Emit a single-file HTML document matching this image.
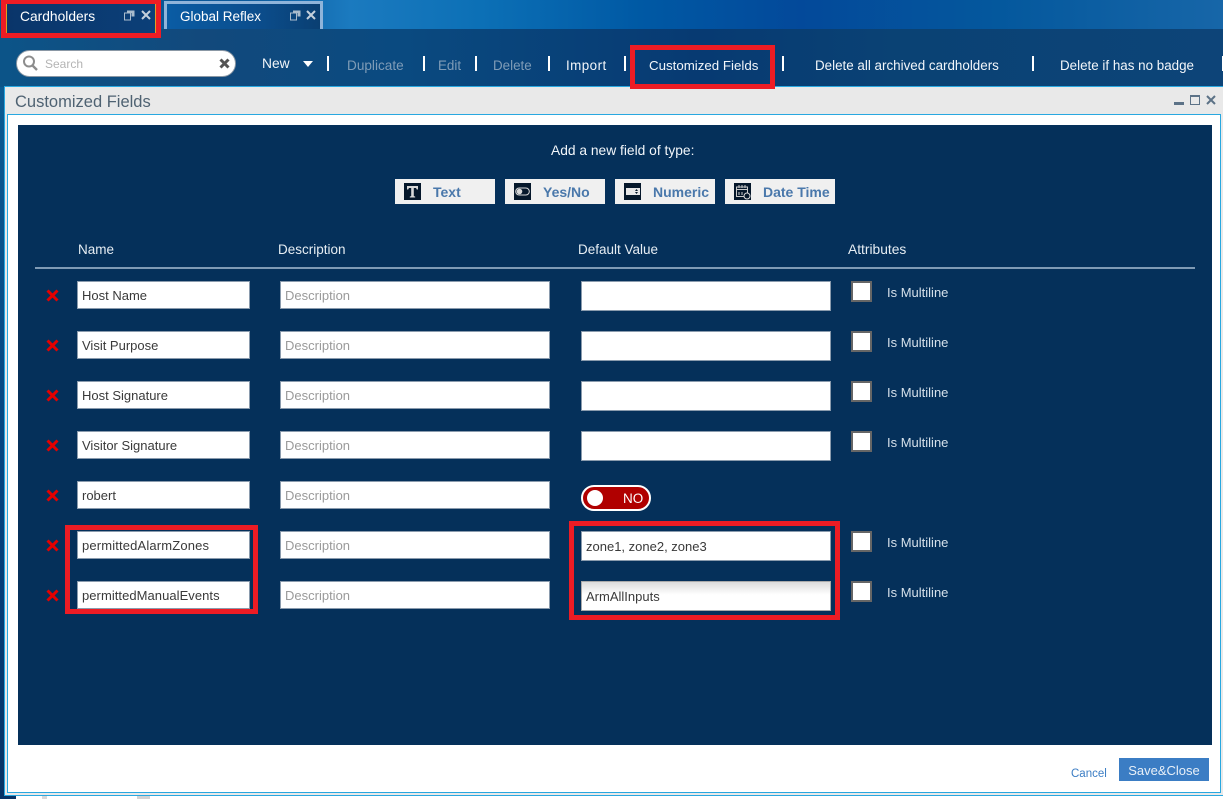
<!DOCTYPE html>
<html lang="en">
<head>
<meta charset="utf-8">
<title>Customized Fields</title>
<style>
html,body{margin:0;padding:0;width:1223px;height:799px;overflow:hidden;background:#fff}
body{position:relative;font-family:"Liberation Sans",Arial,sans-serif;font-size:13.5px}
div,span,svg{position:absolute;box-sizing:border-box}
.t{white-space:nowrap;line-height:18px;height:18px}
.top{left:0;top:0;width:1223px;height:29px;background:linear-gradient(90deg,#0a4d8a 0,#0b5a9c 250px,#1b7abf 350px,#0c70b6 480px,#0059a4 640px,#03499a 800px,#04589d 1000px,#1766a8 1223px)}
.bar{left:0;top:29px;width:1223px;height:58px;background:linear-gradient(90deg,#0c5488 0,#12497c 200px,#0a4a80 400px,#073a72 700px,#0a4274 900px,#0d4478 1223px)}
.side{left:0;top:87px;width:5px;height:712px;background:linear-gradient(180deg,#0b5b93,#05427e 60%,#073365)}
.tb{color:#f2f6fa;top:57px;font-size:13.4px}
.dis{color:#7f9cb7}
.sep{top:56px;width:2px;height:15px;background:#fff}
.in{background:#fff;border:1px solid #8a9bad;height:28px;color:#3a3a3a;padding-left:4px;line-height:27px;font-size:13px;white-space:nowrap}
.n{left:77px;width:173px}
.d{left:280px;width:270px;color:#9a9a9a}
.v{left:581px;width:250px;height:30px;line-height:29px}
.cb{left:851px;width:21px;height:21px;background:#fff;border:2px solid #666}
.ml{left:887px;color:#d5e0ea;font-size:13px}
.h{color:#e6edf3;top:241px;font-size:13.5px}
.x{left:46px;width:13px;height:13px}
.btn{top:179px;height:25px;background:#f0f0f0}
.ico{left:9px;top:4px;width:17px;height:17px;background:#06182b}
.lbl{top:4px;left:38px;color:#4a78ab;font-weight:bold;font-size:14px;line-height:18px;white-space:nowrap}
.red{border:5px solid #ed1c24}
</style>
</head>
<body>
<div class="top"></div>
<div class="bar"></div>
<div class="side"></div>

<!-- tabs -->
<div style="left:6px;top:4px;width:150px;height:29px;background:linear-gradient(90deg,#0a356a,#0b3f78);border-left:1px solid #e0a020;border-right:1px solid #e0a020"></div>
<div class="t" style="left:20px;top:8px;color:#fff;font-size:13.8px">Cardholders</div>
<svg style="left:124px;top:10px" width="11" height="11" viewBox="0 0 11 11"><path d="M0.5 3h6v7h-6z" fill="none" stroke="#a9bccd"/><path d="M3 0.5h7.5v6h-3V3H3z" fill="#a9bccd"/></svg>
<svg style="left:141px;top:10px" width="10" height="10" viewBox="0 0 10 10"><path d="M1 1l8 8M9 1l-8 8" stroke="#c4d0dc" stroke-width="2"/></svg>

<div style="left:164px;top:1px;width:159px;height:28px;background:linear-gradient(90deg,#0a5ca4,#0b4d8c 60%,#0a3f72);border:3px solid #8fb4da;border-bottom:0"></div>
<div class="t" style="left:180px;top:8px;color:#fff;font-size:13.5px">Global Reflex</div>
<svg style="left:290px;top:10px" width="11" height="11" viewBox="0 0 11 11"><path d="M0.5 3h6v7h-6z" fill="none" stroke="#a9bccd"/><path d="M3 0.5h7.5v6h-3V3H3z" fill="#a9bccd"/></svg>
<svg style="left:306px;top:10px" width="10" height="10" viewBox="0 0 10 10"><path d="M1 1l8 8M9 1l-8 8" stroke="#c4d0dc" stroke-width="2"/></svg>

<!-- search -->
<div style="left:16px;top:50px;width:220px;height:27px;background:#fff;border:1px solid #8b98a5;border-radius:14px"></div>
<svg style="left:22px;top:54px" width="18" height="18" viewBox="0 0 18 18"><circle cx="7" cy="7.5" r="5" fill="none" stroke="#8d8d8d" stroke-width="2"/><path d="M10.5 11.5l4.5 4.5" stroke="#8d8d8d" stroke-width="2.4"/></svg>
<div class="t" style="left:45px;top:55px;color:#b4b4b4;font-size:12px">Search</div>
<svg style="left:219px;top:58px" width="11" height="11" viewBox="0 0 11 11"><path d="M1.5 1.5l8 8M9.5 1.5l-8 8" stroke="#555" stroke-width="3"/></svg>

<!-- toolbar -->
<div class="t tb" style="left:262px;top:55px;font-size:13.8px">New</div>
<svg style="left:303px;top:61px" width="10" height="6" viewBox="0 0 10 6"><path d="M0 0h10L5 6z" fill="#fff"/></svg>
<div class="sep" style="left:327px"></div>
<div class="t tb dis" style="left:347px;font-size:13.6px">Duplicate</div>
<div class="sep" style="left:423px"></div>
<div class="t tb dis" style="left:438px">Edit</div>
<div class="sep" style="left:475px"></div>
<div class="t tb dis" style="left:493px">Delete</div>
<div class="sep" style="left:548px"></div>
<div class="t tb" style="left:566px;letter-spacing:.45px">Import</div>
<div class="sep" style="left:624px"></div>
<div class="t tb" style="left:649px;font-size:13.3px">Customized Fields</div>
<div class="sep" style="left:782px"></div>
<div class="t tb" style="left:815px">Delete all archived cardholders</div>
<div class="sep" style="left:1032px"></div>
<div class="t tb" style="left:1060px">Delete if has no badge</div>
<div class="sep" style="left:1222px;width:1px"></div>

<!-- dialog -->
<div style="left:4px;top:86px;width:1219px;height:710px;background:#e9e9e9;border:1px solid #29a8e0;border-right:0"></div>
<div class="t" style="left:15px;top:92px;color:#4f6272;font-size:16.5px;line-height:20px;height:20px">Customized Fields</div>
<div style="left:1174px;top:102px;width:10px;height:3px;background:#5c7287"></div>
<div style="left:1190px;top:95px;width:10px;height:10px;border:1px solid #5c7287;border-top-width:2px"></div>
<svg style="left:1206px;top:95px" width="10" height="10" viewBox="0 0 10 10"><path d="M1 1l8 8M9 1l-8 8" stroke="#5c7287" stroke-width="2"/></svg>
<div style="left:7px;top:114px;width:1214px;height:679px;background:#fff;border:1px solid #29a8e0"></div>
<div style="left:18px;top:125px;width:1194px;height:620px;background:#05305a"></div>

<div class="t" style="left:551px;top:142px;color:#f2f6fa;font-size:13.8px">Add a new field of type:</div>

<div class="btn" style="left:395px;width:100px"><div class="ico"><svg style="left:2px;top:2px" width="13" height="13" viewBox="0 0 13 13"><path d="M1 1h11v3.5h-1.2L10 3H7.8v8l1.4.6V12.5H3.8v-.9L5.2 11V3H3L2.2 4.5H1z" fill="#d8d8d8"/></svg></div><span class="lbl">Text</span></div>
<div class="btn" style="left:505px;width:100px"><div class="ico"><svg style="left:1px;top:4px" width="15" height="9" viewBox="0 0 15 9"><rect x=".7" y="1" width="13.6" height="7" rx="3.5" fill="none" stroke="#d8d8d8"/><circle cx="4.5" cy="4.5" r="2.8" fill="#d8d8d8"/></svg></div><span class="lbl">Yes/No</span></div>
<div class="btn" style="left:615px;width:100px"><div class="ico"><svg style="left:2px;top:4px" width="14" height="9" viewBox="0 0 14 9"><path d="M0 1h14v7H0z" fill="#e8e8e8"/><path d="M9 4l1.5-2L12 4zM9 5l1.5 2L12 5z" fill="#06182b"/></svg></div><span class="lbl">Numeric</span></div>
<div class="btn" style="left:725px;width:110px"><div class="ico"><svg style="left:1px;top:1px" width="16" height="16" viewBox="0 0 16 16"><path d="M1.5 3h11v9.5h-11zM1.5 5.5h11M4 1v3M7 1v3M10 1v3M4 8v3M7 8v3" fill="none" stroke="#ccc"/><circle cx="12" cy="12" r="3" fill="#06182b" stroke="#ddd"/></svg></div><span class="lbl">Date Time</span></div>

<div class="t h" style="left:78px">Name</div>
<div class="t h" style="left:278px">Description</div>
<div class="t h" style="left:578px">Default Value</div>
<div class="t h" style="left:848px;font-size:13.8px">Attributes</div>
<div style="left:35px;top:267px;width:1160px;height:2px;background:#7f9ab5"></div>

<!-- row 1 -->
<svg class="x" style="top:289px" viewBox="0 0 13 13"><path d="M1.5 1.5l10 10M11.5 1.5l-10 10" stroke="#e30000" stroke-width="3"/></svg>
<div class="in n" style="top:281px">Host Name</div>
<div class="in d" style="top:281px">Description</div>
<div class="in v" style="top:281px"></div>
<div class="cb" style="top:281px"></div>
<div class="t ml" style="top:284px">Is Multiline</div>

<!-- row 2 -->
<svg class="x" style="top:339px" viewBox="0 0 13 13"><path d="M1.5 1.5l10 10M11.5 1.5l-10 10" stroke="#e30000" stroke-width="3"/></svg>
<div class="in n" style="top:331px">Visit Purpose</div>
<div class="in d" style="top:331px">Description</div>
<div class="in v" style="top:331px"></div>
<div class="cb" style="top:331px"></div>
<div class="t ml" style="top:334px">Is Multiline</div>

<!-- row 3 -->
<svg class="x" style="top:389px" viewBox="0 0 13 13"><path d="M1.5 1.5l10 10M11.5 1.5l-10 10" stroke="#e30000" stroke-width="3"/></svg>
<div class="in n" style="top:381px">Host Signature</div>
<div class="in d" style="top:381px">Description</div>
<div class="in v" style="top:381px"></div>
<div class="cb" style="top:381px"></div>
<div class="t ml" style="top:384px">Is Multiline</div>

<!-- row 4 -->
<svg class="x" style="top:439px" viewBox="0 0 13 13"><path d="M1.5 1.5l10 10M11.5 1.5l-10 10" stroke="#e30000" stroke-width="3"/></svg>
<div class="in n" style="top:431px">Visitor Signature</div>
<div class="in d" style="top:431px">Description</div>
<div class="in v" style="top:431px"></div>
<div class="cb" style="top:431px"></div>
<div class="t ml" style="top:434px">Is Multiline</div>

<!-- row 5 -->
<svg class="x" style="top:489px" viewBox="0 0 13 13"><path d="M1.5 1.5l10 10M11.5 1.5l-10 10" stroke="#e30000" stroke-width="3"/></svg>
<div class="in n" style="top:481px">robert</div>
<div class="in d" style="top:481px">Description</div>
<div style="left:581px;top:485px;width:70px;height:26px;background:#b00000;border:2px solid #fff;border-radius:13px"></div>
<div style="left:587px;top:490px;width:16px;height:16px;background:#fff;border-radius:50%"></div>
<div class="t" style="left:623px;top:490px;color:#fff;font-size:13.5px">NO</div>

<!-- row 6 -->
<svg class="x" style="top:539px" viewBox="0 0 13 13"><path d="M1.5 1.5l10 10M11.5 1.5l-10 10" stroke="#e30000" stroke-width="3"/></svg>
<div class="in n" style="top:531px;letter-spacing:.15px">permittedAlarmZones</div>
<div class="in d" style="top:531px">Description</div>
<div class="in v" style="top:531px">zone1, zone2, zone3</div>
<div class="cb" style="top:531px"></div>
<div class="t ml" style="top:534px">Is Multiline</div>

<!-- row 7 -->
<svg class="x" style="top:589px" viewBox="0 0 13 13"><path d="M1.5 1.5l10 10M11.5 1.5l-10 10" stroke="#e30000" stroke-width="3"/></svg>
<div class="in n" style="top:581px;letter-spacing:.05px">permittedManualEvents</div>
<div class="in d" style="top:581px">Description</div>
<div class="in v" style="top:581px;background:linear-gradient(180deg,#dcdcdc,#fff 45%);border-color:#aaa">ArmAllInputs</div>
<div class="cb" style="top:581px"></div>
<div class="t ml" style="top:584px">Is Multiline</div>

<!-- footer -->
<div class="t" style="left:1071px;top:765px;color:#3b7dc4;font-size:11.5px">Cancel</div>
<div class="t" style="left:1119px;top:758px;width:90px;height:23px;background:#3b7dc4;color:#e8f0f8;font-size:13px;line-height:25px;text-align:center">Save&amp;Close</div>

<!-- strip below dialog -->
<div style="left:0;top:796px;width:16px;height:3px;background:#073365"></div>
<div style="left:42px;top:796px;width:5px;height:3px;background:#d8d8d8"></div>
<div style="left:137px;top:796px;width:13px;height:3px;background:#d3d3d3"></div>

<!-- annotation boxes -->
<div class="red" style="left:1px;top:-1px;width:160px;height:39px"></div>
<div class="red" style="left:630px;top:45px;width:145px;height:44px"></div>
<div class="red" style="left:65px;top:525px;width:193px;height:89px"></div>
<div class="red" style="left:569px;top:521px;width:271px;height:99px"></div>
</body>
</html>
